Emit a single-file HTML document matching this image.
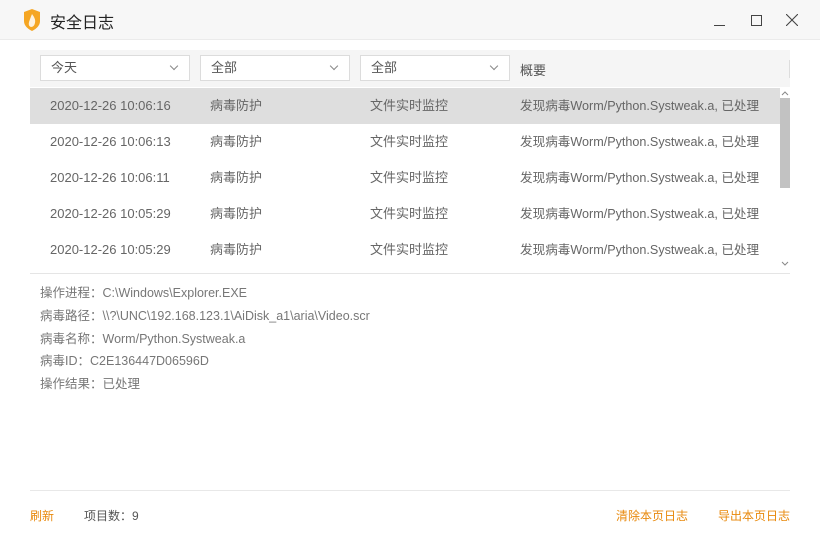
<!DOCTYPE html><html><head><meta charset="utf-8"><style>
body{margin:0;width:820px;height:540px;background:#fff;font-family:"Liberation Sans","Noto Sans CJK SC",sans-serif;position:relative;overflow:hidden;color:#666;font-size:12px}
.a{position:absolute}
.tb{left:0;top:0;width:820px;height:39px;background:#f7f7f7;border-bottom:1px solid #ebebeb}
.sel{top:55px;height:26px;background:#fff;border:1px solid #dcdcdc;box-sizing:border-box;font-size:13px;color:#555;line-height:24px;padding-left:10px}
.sel:after{content:"";position:absolute;right:12px;top:7px;width:5px;height:5px;border-right:1px solid #888;border-bottom:1px solid #888;transform:rotate(45deg)}
.row{left:30px;width:750px;height:36px;line-height:36px;font-size:13px;color:#666}
.row span{position:absolute}
.row span:last-child{font-size:12.6px}
.d{left:40px;font-size:12.5px;color:#777}
</style></head><body>
<div class="a tb"></div>
<svg class="a" style="left:22px;top:9px" width="20" height="22" viewBox="0 0 20 22"><path d="M2 3 L10 0 L18 3 L18 12 Q18 18 10 22 Q2 18 2 12Z" fill="#f5a623"/><path d="M10 5 Q14 10 13 14 Q12 18 9 18 Q6 17 7 13 Q8 10 10 5Z" fill="#fff" opacity=".85"/></svg>
<div class="a" style="left:50px;top:9px;font-size:16px;color:#222">安全日志</div>
<div class="a" style="left:714px;top:25px;width:11px;height:1px;background:#444"></div>
<div class="a" style="left:751px;top:15px;width:9px;height:9px;border:1px solid #444"></div>
<svg class="a" style="left:786px;top:14px" width="12" height="12"><path d="M0 0L12 12M12 0L0 12" stroke="#444" stroke-width="1.1"/></svg>
<div class="a" style="left:30px;top:50px;width:760px;height:37px;background:#f5f5f5"></div>
<div class="a" style="left:789px;top:60px;width:1px;height:18px;background:#ddd"></div>
<div class="a sel" style="left:40px;width:150px">今天</div>
<div class="a sel" style="left:200px;width:150px">全部</div>
<div class="a sel" style="left:360px;width:150px">全部</div>
<div class="a" style="left:520px;top:60px;font-size:13px;color:#555">概要</div>
<div class="a" style="left:30px;top:88px;width:750px;height:36px;background:#dedede"></div>
<div class="a" style="left:780px;top:98px;width:10px;height:90px;background:#c2c2c2"></div>
<svg class="a" style="left:781px;top:90px" width="8" height="6"><path d="M1 5L4 2L7 5" stroke="#888" fill="none"/></svg>
<svg class="a" style="left:781px;top:261px" width="8" height="6"><path d="M1 1L4 4L7 1" stroke="#888" fill="none"/></svg>
<div class="a row" style="top:88px"><span style="left:20px">2020-12-26 10:06:16</span><span style="left:180px">病毒防护</span><span style="left:340px">文件实时监控</span><span style="left:490px">发现病毒Worm/Python.Systweak.a, 已处理</span></div>
<div class="a row" style="top:124px"><span style="left:20px">2020-12-26 10:06:13</span><span style="left:180px">病毒防护</span><span style="left:340px">文件实时监控</span><span style="left:490px">发现病毒Worm/Python.Systweak.a, 已处理</span></div>
<div class="a row" style="top:160px"><span style="left:20px">2020-12-26 10:06:11</span><span style="left:180px">病毒防护</span><span style="left:340px">文件实时监控</span><span style="left:490px">发现病毒Worm/Python.Systweak.a, 已处理</span></div>
<div class="a row" style="top:196px"><span style="left:20px">2020-12-26 10:05:29</span><span style="left:180px">病毒防护</span><span style="left:340px">文件实时监控</span><span style="left:490px">发现病毒Worm/Python.Systweak.a, 已处理</span></div>
<div class="a row" style="top:232px"><span style="left:20px">2020-12-26 10:05:29</span><span style="left:180px">病毒防护</span><span style="left:340px">文件实时监控</span><span style="left:490px">发现病毒Worm/Python.Systweak.a, 已处理</span></div>
<div class="a" style="left:30px;top:273px;width:760px;height:1px;background:#e5e5e5"></div>
<div class="a d" style="top:282px">操作进程：C:\Windows\Explorer.EXE</div>
<div class="a d" style="top:305px">病毒路径：\\?\UNC\192.168.123.1\AiDisk_a1\aria\Video.scr</div>
<div class="a d" style="top:328px">病毒名称：Worm/Python.Systweak.a</div>
<div class="a d" style="top:350px">病毒ID：C2E136447D06596D</div>
<div class="a d" style="top:373px">操作结果：已处理</div>
<div class="a" style="left:30px;top:490px;width:760px;height:1px;background:#e8e8e8"></div>
<div class="a" style="left:30px;top:507px;color:#e8890c">刷新</div>
<div class="a" style="left:84px;top:507px;color:#555">项目数：9</div>
<div class="a" style="left:616px;top:507px;color:#e8890c">清除本页日志</div>
<div class="a" style="left:718px;top:507px;color:#e8890c">导出本页日志</div>
</body></html>
